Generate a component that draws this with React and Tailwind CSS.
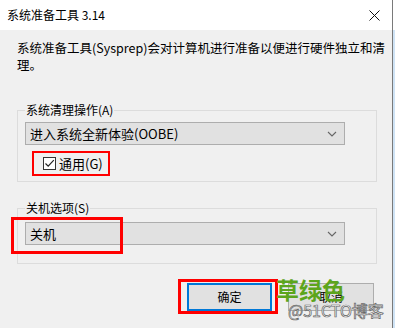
const font = "font-['Microsoft_YaHei_UI','Noto_Sans_CJK_SC',sans-serif]";

const Chevron = () => (
  <svg width="10" height="6" viewBox="0 0 10 6" className="mr-[7px]">
    <path d="M1 1 L5 5 L9 1" fill="none" stroke="#666" strokeWidth="1.1" />
  </svg>
);

const Select = ({ value }) => (
  <div className="w-[320px] h-[23px] bg-[#e1e1e1] border border-[#adadad] flex items-center justify-between">
    <span className="pl-[4px] text-[13px] leading-[16px] text-black">{value}</span>
    <Chevron />
  </div>
);

export default function App() {
  return (
    <div className={`w-[395px] h-[328px] flex overflow-hidden bg-white ${font}`}>

      {/* Dialog window */}
      <div className="w-[393px] h-full flex flex-col border-r border-[#7a7a7a]">

        {/* Title bar */}
        <div className="h-[30px] bg-white flex items-center justify-between pl-[7px] pr-[12px]">
          <span className="text-[12px] leading-[14px] text-black">系统准备工具 3.14</span>
          <svg width="11" height="11" viewBox="0 0 11 11">
            <path d="M0.5 0.5 L10.5 10.5 M10.5 0.5 L0.5 10.5" stroke="#111" strokeWidth="1" />
          </svg>
        </div>

        {/* Body */}
        <div className="flex-1 bg-[#f0f0f0] flex flex-col relative">
          <p className="pl-[17px] pr-[2px] pt-[9px] text-[12.5px] leading-[17px] text-black">
            系统准备工具(Sysprep)会对计算机进行准备以便进行硬件独立和清理。
          </p>

          {/* Cleanup action */}
          <fieldset className="ml-[17px] mt-[30px] w-[360px] border border-[#dcdcdc] pl-[7px] pb-[5px]">
            <legend className="px-[1px] text-[12px] leading-[14px] text-black">系统清理操作(A)</legend>
            <div className="mt-[5px]">
              <Select value="进入系统全新体验(OOBE)" />
            </div>
            <div className="mt-[6px] ml-[7px] w-[78px] h-[25px] border-2 border-[#ff0000] flex items-center pl-[9px]">
              <div className="w-[13px] h-[13px] border border-[#333] bg-white flex items-center justify-center">
                <svg width="11" height="11" viewBox="0 0 11 11">
                  <path d="M1.5 5.5 L4.2 8.2 L9.8 2.2" fill="none" stroke="#222" strokeWidth="1.2" />
                </svg>
              </div>
              <span className="ml-[3px] text-[13px] leading-[16px] text-black">通用(G)</span>
            </div>
          </fieldset>

          {/* Shutdown options */}
          <fieldset className="ml-[17px] mt-[19px] w-[360px] border border-[#dcdcdc] pl-[7px] pb-[18px]">
            <legend className="px-[1px] text-[12px] leading-[14px] text-black">关机选项(S)</legend>
            <div className="mt-[7px] relative">
              <Select value="关机" />
              <div className="absolute -left-[14px] -top-[5px] w-[112px] h-[37px] border-[3px] border-[#ff0000]" />
            </div>
          </fieldset>

          {/* Buttons */}
          <div className="mt-[19px] ml-[187px] flex gap-[16px] relative">
            <div className="absolute -left-[9px] -top-[4px] w-[100px] h-[35px] border-[3px] border-[#ff0000]" />
            <button className="w-[85px] h-[28px] bg-[#e1e1e1] border-2 border-[#0078d7] text-[12px] leading-[14px] text-black">
              确定
            </button>
            <button className="w-[86px] h-[28px] bg-[#e1e1e1] border border-[#adadad] text-[12px] leading-[14px] text-black">
              取消
            </button>
            <span className="absolute left-[89px] -top-[8px] text-[23px] leading-[28px] text-[#5ca51c] font-bold">
              草绿色
            </span>
            <span className="absolute left-[101px] top-[17px] text-[16px] leading-[20px] text-white [-webkit-text-stroke:0.7px_#666]">
              @51CTO博客
            </span>
          </div>
        </div>
      </div>

      {/* Edge of screen behind dialog */}
      <div className="flex-1 flex flex-col">
        <div className="h-[30px] bg-white" />
        <div className="flex-1 bg-[#cfe3f5]" />
      </div>
    </div>
  );
}
